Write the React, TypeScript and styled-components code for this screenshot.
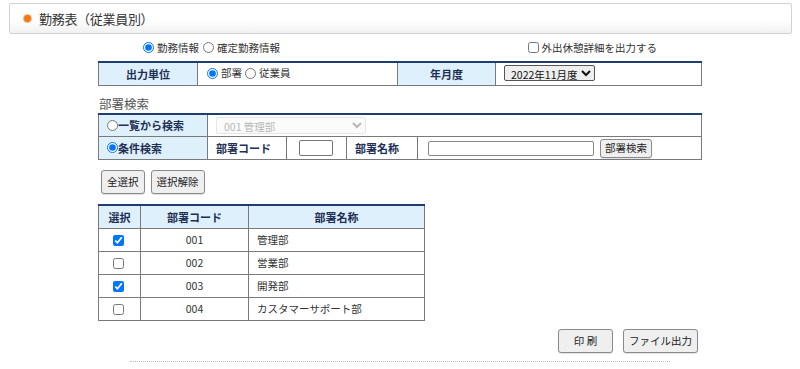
import React from "react";
import styled, { createGlobalStyle } from "styled-components";

const GlobalStyle = createGlobalStyle`
  body {
    margin: 0;
    background: #fff;
    font-family: "Noto Sans CJK JP", "Noto Sans", sans-serif;
    color: #222;
  }
`;

const departments = [
  { code: "001", name: "管理部", checked: true },
  { code: "002", name: "営業部", checked: false },
  { code: "003", name: "開発部", checked: true },
  { code: "004", name: "カスタマーサポート部", checked: false },
];

const App: React.FC = () => {
  return (
    <>
      <GlobalStyle />
      <Page>
        <TitleBar>
          <TitleDot />
          <Title>勤務表（従業員別）</Title>
        </TitleBar>

        <Content>
          <OptionRow>
            <Choice>
              <Radio name="kind" defaultChecked />
              勤務情報
            </Choice>
            <Choice>
              <Radio name="kind" />
              確定勤務情報
            </Choice>
            <Spacer />
            <Choice>
              <Check />
              外出休憩詳細を出力する
            </Choice>
          </OptionRow>

          <FormTable $gap={6}>
            <colgroup>
              <col style={{ width: 99 }} />
              <col style={{ width: 200 }} />
              <col style={{ width: 98 }} />
              <col />
            </colgroup>
            <tbody>
              <tr>
                <LabelCell $center>出力単位</LabelCell>
                <ValueCell>
                  <Choice>
                    <Radio name="unit" defaultChecked />
                    部署
                  </Choice>
                  <Choice>
                    <Radio name="unit" />
                    従業員
                  </Choice>
                </ValueCell>
                <LabelCell $center>年月度</LabelCell>
                <ValueCell>
                  <MonthSelect defaultValue="2022-11">
                    <option value="2022-11">2022年11月度</option>
                  </MonthSelect>
                </ValueCell>
              </tr>
            </tbody>
          </FormTable>

          <SectionTitle>部署検索</SectionTitle>

          <FormTable $gap={1}>
            <colgroup>
              <col style={{ width: 109 }} />
              <col style={{ width: 79 }} />
              <col style={{ width: 60 }} />
              <col style={{ width: 71 }} />
              <col />
            </colgroup>
            <tbody>
              <tr>
                <LabelCell>
                  <Choice $tight>
                    <Radio name="search" />
                    一覧から検索
                  </Choice>
                </LabelCell>
                <ValueCell colSpan={4}>
                  <DeptSelect disabled defaultValue="001">
                    <option value="001">001 管理部</option>
                  </DeptSelect>
                </ValueCell>
              </tr>
              <tr>
                <LabelCell>
                  <Choice $tight>
                    <Radio name="search" defaultChecked />
                    条件検索
                  </Choice>
                </LabelCell>
                <PlainLabel>部署コード</PlainLabel>
                <ValueCell>
                  <CodeInput />
                </ValueCell>
                <PlainLabel>部署名称</PlainLabel>
                <ValueCell>
                  <NameInput />
                  <Button>部署検索</Button>
                </ValueCell>
              </tr>
            </tbody>
          </FormTable>

          <ButtonRow>
            <Button $tall>全選択</Button>
            <Button $tall>選択解除</Button>
          </ButtonRow>

          <ListTable>
            <colgroup>
              <col style={{ width: 42 }} />
              <col style={{ width: 108 }} />
              <col />
            </colgroup>
            <thead>
              <tr>
                <HeadCell>選択</HeadCell>
                <HeadCell>部署コード</HeadCell>
                <HeadCell>部署名称</HeadCell>
              </tr>
            </thead>
            <tbody>
              {departments.map((d) => (
                <tr key={d.code}>
                  <BodyCell $align="center">
                    <Check defaultChecked={d.checked} />
                  </BodyCell>
                  <BodyCell $align="center">{d.code}</BodyCell>
                  <BodyCell $align="left">{d.name}</BodyCell>
                </tr>
              ))}
            </tbody>
          </ListTable>

          <ActionRow>
            <Button $tall $wide>印 刷</Button>
            <Button $tall>ファイル出力</Button>
          </ActionRow>
        </Content>

        <Divider />
      </Page>
    </>
  );
};

export default App;

const Page = styled.div`
  width: 800px;
  height: 369px;
  padding-top: 3px;
  box-sizing: border-box;
  overflow: hidden;
`;

const TitleBar = styled.div`
  margin: 0 8px 0 9px;
  height: 31px;
  box-sizing: border-box;
  border: 1px solid #d2d2d2;
  border-radius: 2px;
  background: linear-gradient(#ffffff 0%, #ffffff 55%, #f1f1f1 100%);
  display: flex;
  align-items: center;
  padding-left: 14px;
`;

const TitleDot = styled.span`
  width: 7px;
  height: 7px;
  border-radius: 50%;
  background: #f07a1a;
  box-shadow: 0 0 0 1px #f7b98a;
  margin-right: 8px;
`;

const Title = styled.h1`
  margin: 0;
  font-size: 13px;
  font-weight: normal;
  color: #333;
  letter-spacing: -0.3px;
`;

const Content = styled.div`
  margin-left: 98px;
  width: 604px;
`;

const OptionRow = styled.div`
  display: flex;
  align-items: center;
  height: 16px;
  margin-top: 5px;
  padding-left: 44px;
  padding-right: 42px;
  font-size: 10.5px;
  color: #333;
`;

const Spacer = styled.div`
  flex: 1;
`;

const Choice = styled.label<{ $tight?: boolean }>`
  display: inline-flex;
  align-items: center;
  margin-right: ${(p) => (p.$tight ? "0" : "3px")};
  white-space: nowrap;

  input {
    margin: 0 ${(p) => (p.$tight ? "0" : "3px")} 0 ${(p) => (p.$tight ? "0" : "1px")};
  }
`;

const Radio = styled.input.attrs({ type: "radio" })`
  width: 11px;
  height: 11px;
`;

const Check = styled.input.attrs({ type: "checkbox" })`
  width: 11px;
  height: 11px;
  margin: 0 3px 0 0;
  vertical-align: middle;
`;

const FormTable = styled.table<{ $gap: number }>`
  width: 604px;
  table-layout: fixed;
  border-collapse: collapse;
  border-top: 2px solid #1f3d70;
  margin-top: ${(p) => p.$gap}px;

  td {
    border: 1px solid #7a7a7a;
    border-top: none;
    height: 23px;
    padding: 0;
    box-sizing: border-box;
    line-height: 14px;
  }

  tr + tr td {
    border-top: 1px solid #7a7a7a;
  }
`;

const LabelCell = styled.td<{ $center?: boolean }>`
  background: #def0fb;
  font-size: 11px;
  font-weight: bold;
  color: #1e2f55;
  text-align: ${(p) => (p.$center ? "center" : "left")};
  padding-left: ${(p) => (p.$center ? "0" : "8px")} !important;
`;

const PlainLabel = styled.td`
  font-size: 11px;
  font-weight: bold;
  color: #1e2f55;
  padding-left: 8px !important;
`;

const ValueCell = styled.td`
  font-size: 10.5px;
  color: #333;
  padding-left: 8px !important;

  > label {
    margin-right: 2px;
  }
`;

const MonthSelect = styled.select`
  font-family: "Noto Sans CJK JP", sans-serif;
  font-size: 10.5px;
  height: 16px;
  padding: 0 0 0 2px;
  border: 1px solid #555;
  border-radius: 2px;
  color: #111;
`;

const DeptSelect = styled.select`
  font-family: "Noto Sans CJK JP", sans-serif;
  font-size: 10.5px;
  width: 150px;
  height: 17px;
  padding: 0 0 0 3px;
  border: 1px solid #ddd;
  border-radius: 2px;
  background: #fafafa;
  color: #999;
`;

const CodeInput = styled.input`
  width: 34px;
  height: 16px;
  box-sizing: border-box;
  margin-left: 4px;
  border: 1px solid #777;
  border-radius: 2px;
  vertical-align: middle;
`;

const NameInput = styled.input`
  width: 166px;
  height: 15px;
  box-sizing: border-box;
  margin-left: 2px;
  margin-right: 6px;
  border: 1px solid #888;
  border-radius: 2px;
  vertical-align: middle;
`;

const Button = styled.button<{ $tall?: boolean; $wide?: boolean }>`
  font-family: "Noto Sans CJK JP", sans-serif;
  font-size: 10.5px;
  line-height: 14px;
  color: #222;
  height: ${(p) => (p.$tall ? "24px" : "19px")};
  min-width: ${(p) => (p.$wide ? "55px" : "0")};
  padding: 0 ${(p) => (p.$tall ? "5px" : "4px")};
  background: #efefef;
  border: 1px solid #8a8a8a;
  border-radius: 3px;
  box-shadow: 0 1px 1px rgba(0, 0, 0, 0.12);
  vertical-align: middle;
`;

const SectionTitle = styled.div`
  font-size: 12.5px;
  color: #555;
  margin-top: 10px;
  line-height: 16px;
  padding-left: 1px;
`;

const ButtonRow = styled.div`
  display: flex;
  gap: 6px;
  margin-top: 10px;
  padding-left: 3px;
`;

const ListTable = styled.table`
  width: 327px;
  table-layout: fixed;
  border-collapse: collapse;
  border-top: 2px solid #1f3d70;
  margin-top: 10px;
  font-size: 10.5px;
  line-height: 14px;
`;

const HeadCell = styled.th`
  background: #def0fb;
  height: 23px;
  box-sizing: border-box;
  padding: 0;
  border: 1px solid #7a7a7a;
  border-top: none;
  font-size: 11px;
  font-weight: bold;
  color: #1e2f55;
`;

const BodyCell = styled.td<{ $align: "left" | "center" }>`
  height: 23px;
  box-sizing: border-box;
  padding: 0 ${(p) => (p.$align === "left" ? "8px" : "0")};
  border: 1px solid #7a7a7a;
  text-align: ${(p) => p.$align};
  color: #333;
`;

const ActionRow = styled.div`
  display: flex;
  justify-content: flex-end;
  gap: 10px;
  margin-top: 8px;
  padding-right: 4px;
`;

const Divider = styled.div`
  margin: 8px 0 0 130px;
  width: 540px;
  border-top: 1px dotted #bcbcbc;
`;
